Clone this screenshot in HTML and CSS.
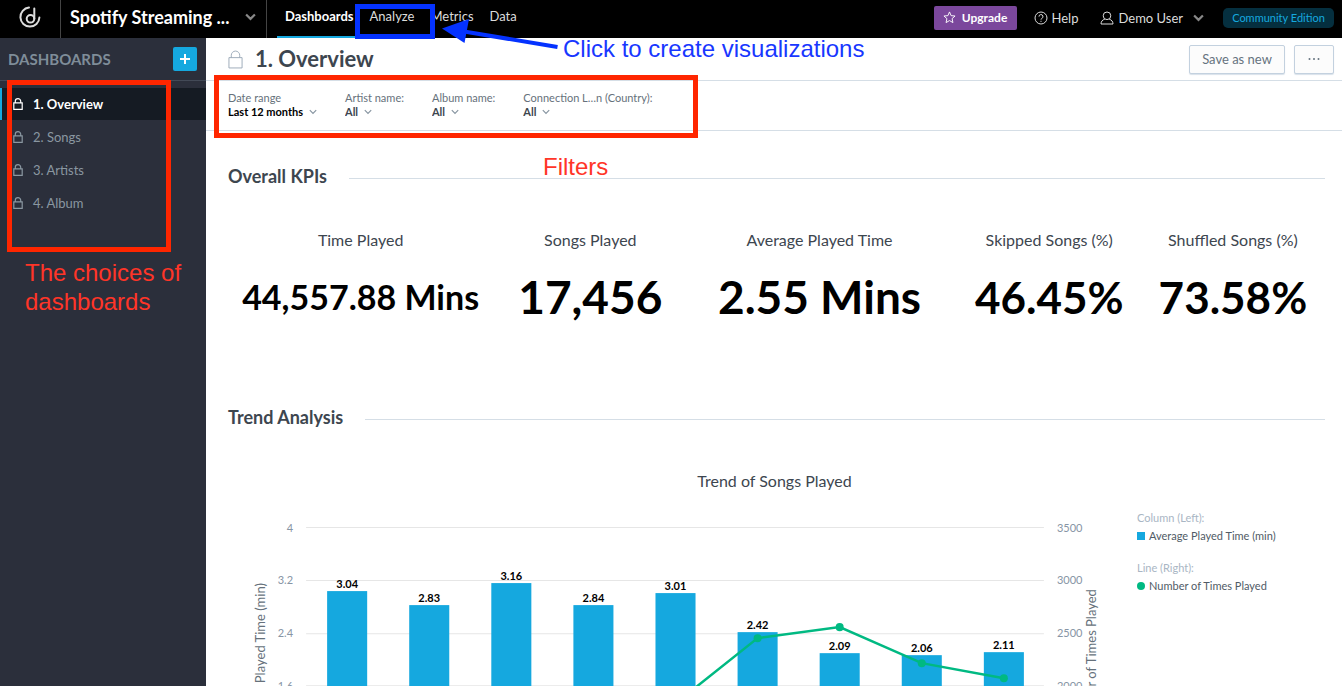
FILE: index.html
```html
<!DOCTYPE html>
<html lang="en">
<head>
<meta charset="utf-8">
<title>1. Overview</title>
<link rel="stylesheet" href="styles.css">
</head>
<body>
<svg class="defs" width="0" height="0" aria-hidden="true">
  <symbol id="chevron" viewBox="0 0 10 7"><path d="M1 1.2 5 5.2 9 1.2"/></symbol>
  <symbol id="lock" viewBox="0 0 16 20"><path d="M1 8h14v11H1zM3.5 8V5.5a4.5 4.5 0 0 1 9 0V8"/></symbol>
</svg>
<div class="app">
  <header class="topbar">
    <a class="brand" href="#" aria-label="Home">
      <svg class="brand-logo" viewBox="0 0 22 22"><path d="M10 1.600A9.500 9.500 0 1 0 20.400 11.500M15.300 2.500V12.800"/><circle cx="11.500" cy="12.800" r="3.800"/></svg>
    </a>
    <div class="project">
      <select class="project-select" aria-label="Project"><option>Spotify Streaming ...</option></select>
      <svg class="chev chev-lg"><use href="#chevron"/></svg>
    </div>
    <nav class="tabs">
      <a class="tab tab-active" href="#">Dashboards</a>
      <a class="tab" href="#">Analyze</a>
      <a class="tab" href="#">Metrics</a>
      <a class="tab" href="#">Data</a>
    </nav>
    <div class="tools">
      <button class="upgrade"><svg class="star" viewBox="0 0 14 14"><path d="m7 1 1.7 4 4.3.4-3.2 2.8.9 4.3L7 10.3l-3.7 2.2.9-4.3L1 5.4 5.3 5z"/></svg>Upgrade</button>
      <a class="tool help" href="#"><svg class="tool-icon" viewBox="0 0 14 14"><circle cx="7" cy="7" r="6"/><path d="M5 5.6a2 2 0 1 1 2.8 1.8c-.6.3-.8.6-.8 1.2M7 9.8v1.1"/></svg>Help</a>
      <button class="tool user"><svg class="tool-icon" viewBox="0 0 14 14"><circle cx="7" cy="4.8" r="3.8"/><path d="M4.8 8.2C2.4 8.800 1 10.500 1 13h12c0-2.500-1.400-4.200-3.800-4.800"/></svg>Demo User<svg class="chev chev-lg"><use href="#chevron"/></svg></button>
      <span class="edition">Community Edition</span>
    </div>
  </header>

  <div class="body">
    <aside class="sidebar">
      <div class="side-head"><h2 class="side-title">DASHBOARDS</h2>
        <button class="add" aria-label="Add dashboard"><svg class="plus" viewBox="0 0 12 12"><path d="M6 1v10M1 6h10"/></svg></button></div>
      <nav class="side-list">
        <a class="side-item side-active" href="#"><svg class="lock-sm"><use href="#lock"/></svg>1. Overview</a>
        <a class="side-item" href="#"><svg class="lock-sm"><use href="#lock"/></svg>2. Songs</a>
        <a class="side-item" href="#"><svg class="lock-sm"><use href="#lock"/></svg>3. Artists</a>
        <a class="side-item" href="#"><svg class="lock-sm"><use href="#lock"/></svg>4. Album</a>
      </nav>
    </aside>

    <main class="main">
      <div class="title-row">
        <svg class="lock-lg"><use href="#lock"/></svg>
        <h1 class="page-title">1. Overview</h1>
        <button class="btn save">Save as new</button>
        <button class="btn more" aria-label="More"><svg class="dots" viewBox="0 0 12 2"><circle cx="1.500" cy="1" r="1"/><circle cx="6" cy="1" r="1"/><circle cx="10.500" cy="1" r="1"/></svg></button>
      </div>
      <form class="filters">
        <div class="filter"><label class="filter-label" for="f-date">Date range</label>
          <div class="filter-value"><select class="filter-select strong" id="f-date"><option>Last 12 months</option></select><svg class="chev"><use href="#chevron"/></svg></div></div>
        <div class="filter"><label class="filter-label" for="f-artist">Artist name:</label>
          <div class="filter-value"><select class="filter-select" id="f-artist"><option>All</option></select><svg class="chev"><use href="#chevron"/></svg></div></div>
        <div class="filter"><label class="filter-label" for="f-album">Album name:</label>
          <div class="filter-value"><select class="filter-select" id="f-album"><option>All</option></select><svg class="chev"><use href="#chevron"/></svg></div></div>
        <div class="filter"><label class="filter-label" for="f-country">Connection L…n (Country):</label>
          <div class="filter-value"><select class="filter-select" id="f-country"><option>All</option></select><svg class="chev"><use href="#chevron"/></svg></div></div>
      </form>

      <div class="content">
        <h2 class="section">Overall KPIs</h2>
        <div class="kpis">
          <div class="kpi"><h3 class="kpi-name">Time Played</h3><p class="kpi-value kpi-small">44,557.88 Mins</p></div>
          <div class="kpi"><h3 class="kpi-name">Songs Played</h3><p class="kpi-value">17,456</p></div>
          <div class="kpi"><h3 class="kpi-name">Average Played Time</h3><p class="kpi-value">2.55 Mins</p></div>
          <div class="kpi"><h3 class="kpi-name">Skipped Songs (%)</h3><p class="kpi-value kpi-mid">46.45%</p></div>
          <div class="kpi"><h3 class="kpi-name">Shuffled Songs (%)</h3><p class="kpi-value kpi-mid">73.58%</p></div>
        </div>
        <h2 class="section">Trend Analysis</h2>
        <h3 class="chart-title">Trend of Songs Played</h3>
        <div class="chart-row">
          <svg class="chart" viewBox="0 0 881 300" role="img" aria-label="Trend of Songs Played">
            <path class="grid" d="M78 17.500h737M78 70.500h737M78 123.500h737M78 175.500h737M78 228.500h737M78 281.500h737"/>
            <g class="bars">
              <rect x="99" y="81" width="40" height="200"/><rect x="181" y="95" width="40" height="186"/>
              <rect x="263" y="73" width="40" height="208"/><rect x="345" y="95" width="40" height="186"/>
              <rect x="427" y="83" width="40" height="198"/><rect x="509" y="122" width="40" height="159"/>
              <rect x="591" y="143" width="40" height="138"/><rect x="673" y="145" width="40" height="136"/>
              <rect x="755" y="142" width="40" height="139"/>
            </g>
            <path class="line" d="M446 194 529 128 611 117 693 153 775 168"/>
            <g class="points"><circle cx="529" cy="128" r="4"/><circle cx="611" cy="117" r="4"/><circle cx="693" cy="153" r="4"/><circle cx="775" cy="168" r="4"/></g>
            <g class="values">
              <text x="119" y="78">3.04</text><text x="201" y="92">2.83</text><text x="283" y="70">3.16</text>
              <text x="365" y="92">2.84</text><text x="447" y="80">3.01</text><text x="529" y="119">2.42</text>
              <text x="611" y="140">2.09</text><text x="693" y="142">2.06</text><text x="775" y="139">2.11</text>
            </g>
            <g class="ticks ticks-left"><text x="65" y="22">4</text><text x="65" y="74">3.2</text><text x="65" y="127">2.4</text><text x="65" y="180">1.6</text></g>
            <g class="ticks"><text x="828" y="22">3500</text><text x="828" y="74">3000</text><text x="828" y="127">2500</text><text x="828" y="180">2000</text></g>
            <text class="axis" transform="translate(37 73) rotate(-90)">Average Played Time (min)</text>
            <text class="axis" transform="translate(867 79) rotate(-90)">Number of Times Played</text>
          </svg>
          <div class="legend">
            <p class="legend-head">Column (Left):</p>
            <p class="legend-item"><span class="key"></span>Average Played Time (min)</p>
            <p class="legend-head">Line (Right):</p>
            <p class="legend-item"><span class="key key-line"></span>Number of Times Played</p>
          </div>
        </div>
      </div>
    </main>
  </div>

  <div class="note box box-side"></div>
  <div class="note box box-filters"></div>
  <div class="note box box-analyze"></div>
  <svg class="note arrow" viewBox="0 0 120 32"><path class="shaft" d="M22 12.500 115.500 28"/><path class="head" d="M0 9.500 27 0 22.500 24z"/></svg>
  <p class="note note-click">Click to create visualizations</p>
  <p class="note note-filters">Filters</p>
  <p class="note note-side">The choices of dashboards</p>
</div>
</body>
</html>
```

FILE: styles.css
```css
* { box-sizing: border-box; margin: 0; }
body { font-family: Lato, "Open Sans", sans-serif; font-size: 13px; color: #3d464f; background: #fff; }
a { color: inherit; text-decoration: none; }
button, select { font: inherit; color: inherit; background: none; border: 0; padding: 0; }
select { appearance: none; }
svg { fill: none; stroke: currentColor; flex: none; }
.defs { position: absolute; }
.app { position: relative; height: 100vh; display: flex; flex-direction: column; overflow: hidden; }

.topbar { height: 38px; flex: none; display: flex; background: #000; color: #dcdcdc; }
.brand { width: 61px; border-right: 1px solid #444; display: flex; align-items: center; justify-content: center; padding-bottom: 4px; }
.brand-logo { width: 22px; height: 22px; stroke-width: 2; stroke-linecap: round; }
.project { width: 206px; padding: 0 10px 4px 9px; border-right: 1px solid #444; display: flex; align-items: center; justify-content: space-between; }
.project-select { font-size: 18px; font-weight: 700; color: #fff; }
.chev { width: 8px; height: 6px; color: #8795a1; stroke-width: 1.5; }
.chev-lg { width: 11px; height: 8px; color: #888; stroke-width: 2; }
.tabs { display: flex; margin-left: 10px; }
.tab { padding: 0 8px; line-height: 33px; }
.tab-active { font-weight: 700; color: #fff; border-bottom: 2px solid #15a8df; }
.tools { margin-left: auto; display: flex; align-items: center; padding: 0 8px 3px 0; }
.tool { display: flex; align-items: center; gap: 4px; font-size: 13px; }
.tool-icon { width: 14px; height: 14px; }
.upgrade { width: 83px; height: 24px; margin-right: 17px; border-radius: 2px; background: #7b479c; color: #fff; font-size: 12px; font-weight: 700; display: flex; align-items: center; justify-content: center; gap: 6px; }
.star { width: 13px; height: 13px; }
.help { margin-right: 22px; }
.user .chev { margin-left: 6px; }
.edition { margin-left: 19px; width: 111px; line-height: 20px; border-radius: 5px; background: #052f3f; color: #15a8df; font-size: 11px; text-align: center; }

.body { flex: 1; min-height: 0; display: flex; }
.sidebar { width: 206px; flex: none; background: #2b2f3b; }
.side-head { height: 43px; padding: 0 9px 0 8px; display: flex; align-items: center; justify-content: space-between; border-bottom: 1px solid #434a57; }
.side-title { font-size: 15px; font-weight: 700; color: #7f8d99; }
.add { width: 24px; height: 24px; border-radius: 2px; background: #15a8df; color: #fff; display: flex; align-items: center; justify-content: center; }
.plus { width: 12px; height: 12px; stroke-width: 2; }
.side-list { padding-top: 7px; }
.side-item { display: flex; align-items: center; gap: 10px; height: 33px; padding-left: 13px; color: #8a97a1; }
.side-active { height: 32px; padding-left: 11px; border-left: 2px solid #15a8df; background: #151b23; color: #fff; font-weight: 700; }
.lock-sm { width: 10px; height: 12px; stroke-width: 2; }

.main { flex: 1; min-width: 0; overflow: auto; scrollbar-width: none; }
.title-row { height: 43px; padding: 0 8px 0 22px; display: flex; align-items: center; border-bottom: 1px solid #d5dee6; }
.lock-lg { width: 15px; height: 19px; color: #9aa9b7; stroke-width: 1; }
.page-title { margin-left: 12px; font-size: 22px; line-height: 24px; font-weight: 700; }
.btn { height: 29px; border: 1px solid #c3d1df; border-radius: 2px; background: #fcfcfc; color: #66737f; box-shadow: 0 1px 1px #d9e2ea; }
.save { width: 96px; margin-left: auto; }
.more { width: 40px; margin-left: 9px; display: flex; align-items: center; justify-content: center; }
.dots { width: 12px; height: 2px; fill: currentColor; stroke: none; }
.filters { height: 50px; padding: 10px 22px 0; display: flex; gap: 28px; border-bottom: 1px solid #d5dee6; font-size: 11px; line-height: 14px; }
.filter-label { display: block; color: #66717b; }
.filter-value { display: flex; align-items: center; gap: 5px; }
.filter-select { height: 14px; font-weight: 700; }
.strong { color: #000; }

.content { padding: 33px 17px 0 22px; }
.section { display: flex; align-items: center; gap: 22px; font-size: 18px; line-height: 24px; font-weight: 700; }
.section::after { content: ""; flex: 1; height: 1px; margin-top: 4px; background: #d5dee6; }
.kpis { display: grid; grid-template-columns: 265fr 194fr 264fr 195fr 172fr; height: 217px; padding: 42px 6px 0 0; text-align: center; white-space: nowrap; }
.kpi-name, .chart-title { font-size: 16px; line-height: 20px; font-weight: 400; }
.kpi-value { margin-top: 20px; font-size: 46px; line-height: 54px; font-weight: 700; color: #000; }
.kpi-small { font-size: 34px; }
.kpi-mid { font-size: 44px; }
.chart-title { margin-top: 42px; padding-right: 4px; text-align: center; }
.chart-row { margin-top: 19px; display: flex; align-items: flex-start; gap: 27px; }
.chart { flex: 1; min-width: 0; }
.grid { stroke: #e6e6e6; }
.bars { fill: #15a8df; stroke: none; }
.line { stroke: #00b982; stroke-width: 2.5; }
.points { fill: #00b982; stroke: none; }
.chart text { stroke: none; fill: #8795a5; font-size: 11px; }
.chart .values text { fill: #000; font-weight: 700; text-anchor: middle; }
.ticks-left { text-anchor: end; }
.chart .axis { fill: #66717b; font-size: 13px; text-anchor: end; }
.legend { width: 188px; font-size: 11px; line-height: 14px; }
.legend-head { margin-top: 1px; color: #a9b6c4; }
.legend-item { margin: 4px 0 18px; display: flex; align-items: center; gap: 4px; color: #505b66; }
.key { width: 8px; height: 8px; background: #15a8df; }
.key-line { border-radius: 50%; background: #00b982; }

.note { position: absolute; font: 24px/29px "Liberation Sans", sans-serif; color: #ff3528; }
.box { border: 5px solid #ff2600; }
.box-side { left: 7px; top: 80px; width: 164px; height: 172px; }
.box-filters { left: 214px; top: 75px; width: 484px; height: 63px; }
.box-analyze { left: 355px; top: 4px; width: 80px; height: 35px; border-color: #0432ff; }
.arrow { left: 442px; top: 19px; width: 120px; height: 32px; color: #0432ff; }
.shaft { stroke-width: 4; }
.head { fill: currentColor; stroke: none; }
.note-click { left: 563px; top: 34px; color: #1837ff; }
.note-filters { left: 543px; top: 152px; }
.note-side { left: 25px; top: 258px; width: 170px; }
```
